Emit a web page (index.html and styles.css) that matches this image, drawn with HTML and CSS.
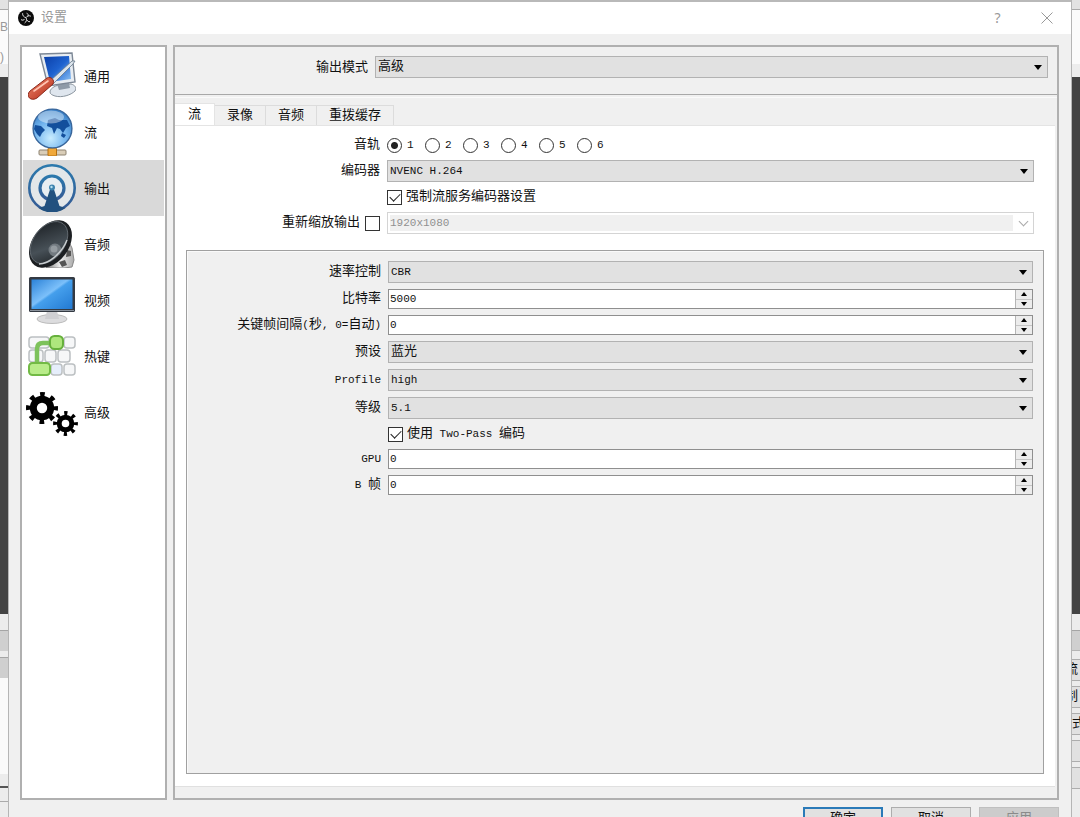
FILE: index.html
```
<!DOCTYPE html>
<html lang="zh-CN">
<head>
    <meta charset="UTF-8">
    <meta name="viewport" content="width=device-width, initial-scale=1.0">
    <title>设置</title>
    <link rel="stylesheet" href="styles.css">
</head>
<body>

<div class="desktop">
    <!-- Main window, left edge -->
    <div class="edge edge-left">
        <div class="edge-title"></div>
        <div class="edge-menu"><span>B</span><span>)</span></div>
        <div class="edge-bar"></div>
        <div class="edge-preview"></div>
        <div class="edge-docks">
            <div class="dock-head"></div>
            <div class="dock-head"></div>
            <div class="dock-list"></div>
            <div class="dock-status"></div>
        </div>
    </div>

    <div class="dialog">
        <div class="titlebar">
            <svg class="logo" viewBox="0 0 16 16">
                <circle cx="8" cy="8" r="8" fill="#0b0b0b"/>
                <path d="M4.6 3.2C4.4 5.6 5.8 7.2 8 7.6M12.9 6.2C10.8 5.2 9 6 8 7.6M6.6 13C8.6 11.8 9 9.6 8 7.6M3 9.6C4.4 10.6 6 10.2 6.6 9M8.6 3.2C10 3.6 10.6 5 10 6.2M12 11.6C10.6 12 9.4 11.2 9.2 10" fill="none" stroke="#ddd" stroke-width="1"/>
            </svg>
            <span class="title">设置</span>
            <button class="title-button" type="button" aria-label="帮助">?</button>
            <button class="title-button" type="button" aria-label="关闭">
                <svg width="12" height="12" viewBox="0 0 12 12"><path d="M.5 .5l11 11M11.5 .5l-11 11" stroke="#999" fill="none"/></svg>
            </button>
        </div>

        <div class="content">
            <nav class="sidebar">
                <button class="nav-item" type="button">
                    <svg viewBox="0 0 48 48">
                        <defs>
                            <linearGradient id="screen" x1="0" y1="0" x2="1" y2="1"><stop offset="0" stop-color="#0b3fa8"/><stop offset=".5" stop-color="#1e62cf"/><stop offset="1" stop-color="#8fc4f5"/></linearGradient>
                            <linearGradient id="handle" x1="0" y1="0" x2="1" y2="1"><stop offset="0" stop-color="#f08a70"/><stop offset="1" stop-color="#b02612"/></linearGradient>
                        </defs>
                        <path d="M22 40c0-3 4-6 9-7l12-1c4 1 6 4 4 7-4 4-13 7-20 5-3-1-5-2-5-4z" fill="#dfe6ee" stroke="#8a949e"/>
                        <path d="M28 29l12-2 2 9-11 2z" fill="#8f9ba8"/>
                        <path d="M12 2l32-1 3 29-27 4z" fill="#e8edf2" stroke="#7d8896" stroke-width="1.4"/>
                        <path d="M16 5l25-1 2 23-21 3z" fill="url(#screen)"/>
                        <path d="M22 29L44 9l3 0-2 3-20 20z" fill="#dce4ec" stroke="#66788a" stroke-width=".8"/>
                        <path d="M2 39l17-13c4-2 8 2 6 6L9 46c-6 4-12-2-7-7z" fill="url(#handle)" stroke="#8e2a1c"/>
                        <path d="M6 39l14-10" stroke="#ffc4b2" stroke-width="1.6" stroke-linecap="round"/>
                    </svg>
                    <span>通用</span>
                </button>
                <button class="nav-item" type="button">
                    <svg viewBox="0 0 48 48">
                        <defs>
                            <radialGradient id="globe" cx=".45" cy=".75" r=".75"><stop offset="0" stop-color="#c8ecff"/><stop offset=".55" stop-color="#72b4ee"/><stop offset="1" stop-color="#357cc4"/></radialGradient>
                        </defs>
                        <path d="M24 38v6" stroke="#777" stroke-width="3"/>
                        <rect x="11" y="42" width="27" height="5" rx="1" fill="#d9cdb8" stroke="#8d8271"/>
                        <rect x="20" y="40" width="8.5" height="8" rx="1" fill="#f0a83a" stroke="#b36f10"/>
                        <circle cx="24.5" cy="20.5" r="19.4" fill="url(#globe)" stroke="#39669b" stroke-width="1.4"/>
                        <path d="M7 17l6 1 4 4-3 3-2 4-3-3-3-5zM20 12l7-2 4 2 8 0 3 6-4 2-3 5-3-4-3-1-3 6-2-6-5-2zM34 25l4 2-2 3-3-2z" fill="#134f9c"/>
                        <ellipse cx="23" cy="9" rx="13" ry="6.5" fill="#fff" opacity=".4"/>
                    </svg>
                    <span>流</span>
                </button>
                <button class="nav-item active" type="button">
                    <svg viewBox="0 0 48 48">
                        <defs>
                            <linearGradient id="wave" x1="0" y1="0" x2="0" y2="1"><stop offset="0" stop-color="#2b79ad"/><stop offset="1" stop-color="#355a94"/></linearGradient>
                        </defs>
                        <circle cx="24" cy="24" r="22.7" fill="#edf5fa" fill-opacity=".5" stroke="url(#wave)" stroke-width="2.6"/>
                        <circle cx="24" cy="24" r="12" fill="#eef6fb" fill-opacity=".5" stroke="url(#wave)" stroke-width="3.2"/>
                        <path d="M22.5 24h3l6 18 6 2c-8 6-19 6-27 0l6-2z" fill="#22517f"/>
                        <circle cx="24" cy="23.5" r="3" fill="#3d83ae"/>
                        <circle cx="23.5" cy="23" r="1.2" fill="#b9e2f2"/>
                    </svg>
                    <span>输出</span>
                </button>
                <button class="nav-item" type="button">
                    <svg viewBox="0 0 48 48">
                        <defs>
                            <linearGradient id="cone" x1="0" y1="0" x2="1" y2="1"><stop offset="0" stop-color="#171b1f"/><stop offset=".6" stop-color="#475057"/><stop offset="1" stop-color="#1c2023"/></linearGradient>
                            <linearGradient id="magnet" x1="0" y1="0" x2="1" y2="0"><stop offset="0" stop-color="#777"/><stop offset=".5" stop-color="#eee"/><stop offset="1" stop-color="#aaa"/></linearGradient>
                        </defs>
                        <path d="M40 20l4 8 2 12-2 7-8 1-18 0 12-12z" fill="url(#magnet)" stroke="#888"/>
                        <path d="M31 42l6-2 2 5-5 2zM39 30l4 1v5l-5 1z" fill="#555"/>
                        <ellipse cx="22.5" cy="24" rx="18" ry="26.500" transform="rotate(37 22.5 24)" fill="#1c1f22"/>
                        <ellipse cx="21" cy="22.5" rx="15.5" ry="23.5" transform="rotate(37 21 22.5)" fill="url(#cone)" stroke="#697178" stroke-width=".8"/>
                        <circle cx="27" cy="30" r="6.5" fill="#727a80"/>
                        <circle cx="26" cy="29" r="3.5" fill="#949ba0"/>
                        <path d="M11 44c10 0 23-11 28-24" fill="none" stroke="#c8cdd0" stroke-width="1.4"/>
                    </svg>
                    <span>音频</span>
                </button>
                <button class="nav-item" type="button">
                    <svg viewBox="0 0 48 48">
                        <defs>
                            <linearGradient id="display" x1="0" y1="0" x2="1" y2="1"><stop offset="0" stop-color="#2b82d8"/><stop offset=".45" stop-color="#7cc0fa"/><stop offset=".5" stop-color="#459fec"/><stop offset="1" stop-color="#2279d2"/></linearGradient>
                        </defs>
                        <ellipse cx="24" cy="43" rx="15" ry="4.5" fill="#dcdcde" stroke="#bbb"/>
                        <path d="M19 35h10l2 8H17z" fill="#cfcfd2"/>
                        <rect x="1" y="1" width="46" height="35" rx="1.5" fill="#343a43"/>
                        <rect x="3.5" y="3.5" width="41" height="29.5" fill="url(#display)"/>
                        <path d="M2 34.5h44" stroke="#8a929c"/>
                    </svg>
                    <span>视频</span>
                </button>
                <button class="nav-item" type="button">
                    <svg viewBox="0 0 48 48">
                        <g fill="#f6f7f8" stroke="#bcc0c2" stroke-width="1.5">
                            <rect x="1" y="5" width="20" height="11" rx="3"/>
                            <rect x="36" y="5" width="11" height="11" rx="3"/>
                            <rect x="1" y="18" width="14" height="12" rx="3"/>
                            <rect x="17" y="18" width="11" height="12" rx="3"/>
                            <rect x="30" y="18" width="12" height="12" rx="3"/>
                            <rect x="23" y="32" width="11" height="11" rx="3" fill="#e6eefb"/>
                            <rect x="36" y="32" width="11" height="11" rx="3"/>
                        </g>
                        <path d="M9 33V17q0-6 6-6h9" fill="none" stroke="#7dc25b" stroke-width="4.5"/>
                        <rect x="1" y="31" width="21" height="12" rx="3.5" fill="#b9ec8a" stroke="#72ba45" stroke-width="2"/>
                        <rect x="22" y="4" width="13" height="13" rx="4.5" fill="#aee67d" stroke="#66b03c" stroke-width="2"/>
                    </svg>
                    <span>热键</span>
                </button>
                <button class="nav-item" type="button">
                    <svg class="gears" viewBox="0 0 52 48">
                        <circle cx="16" cy="20" r="8.7" fill="none" stroke="#000" stroke-width="7"/>
                        <circle cx="16" cy="20" r="13.5" fill="none" stroke="#000" stroke-width="5" stroke-dasharray="4.6 6.003" stroke-dashoffset="2.3"/>
                        <circle cx="39.5" cy="35.5" r="6.3" fill="none" stroke="#000" stroke-width="5"/>
                        <circle cx="39.5" cy="35.5" r="10.2" fill="none" stroke="#000" stroke-width="4.4" stroke-dasharray="3.2 4.811" stroke-dashoffset="1.6"/>
                    </svg>
                    <span>高级</span>
                </button>
            </nav>

            <main class="panel">
                <div class="mode-row">
                    <label for="outputMode">输出模式</label>
                    <div class="combo">
                        <select id="outputMode"><option>高级</option><option>简单</option></select>
                    </div>
                </div>

                <div class="tabs" role="tablist">
                    <button class="tab selected" type="button" role="tab" aria-selected="true">流</button>
                    <button class="tab" type="button" role="tab">录像</button>
                    <button class="tab" type="button" role="tab">音频</button>
                    <button class="tab" type="button" role="tab">重拨缓存</button>
                </div>

                <div class="pane">
                    <div class="form stream-form">
                        <span class="name">音轨</span>
                        <div class="tracks latin">
                            <label><input type="radio" name="track" checked>1</label>
                            <label><input type="radio" name="track">2</label>
                            <label><input type="radio" name="track">3</label>
                            <label><input type="radio" name="track">4</label>
                            <label><input type="radio" name="track">5</label>
                            <label><input type="radio" name="track">6</label>
                        </div>

                        <label class="name" for="encoder">编码器</label>
                        <div class="combo">
                            <select id="encoder" class="latin"><option>NVENC H.264</option></select>
                        </div>

                        <label class="check"><input type="checkbox" checked>强制流服务编码器设置</label>

                        <label class="name">重新缩放输出<input type="checkbox"></label>
                        <div class="combo disabled">
                            <select class="latin" aria-label="缩放分辨率" disabled><option>1920x1080</option></select>
                        </div>
                    </div>

                    <div class="frame">
                        <div class="form">
                            <label class="name" for="rate">速率控制</label>
                            <div class="combo">
                                <select id="rate" class="latin"><option>CBR</option></select>
                            </div>

                            <label class="name" for="bitrate">比特率</label>
                            <div class="spin">
                                <input type="text" inputmode="numeric" id="bitrate" class="latin" value="5000">
                                <div class="steps"><button type="button" aria-label="增加"></button><button type="button" aria-label="减少"></button></div>
                            </div>

                            <label class="name" for="keyint"><span>关键帧间隔<span class="latin">(</span>秒<span class="latin">, 0=</span>自动<span class="latin">)</span></span></label>
                            <div class="spin">
                                <input type="text" inputmode="numeric" id="keyint" class="latin" value="0">
                                <div class="steps"><button type="button" aria-label="增加"></button><button type="button" aria-label="减少"></button></div>
                            </div>

                            <label class="name" for="preset">预设</label>
                            <div class="combo">
                                <select id="preset"><option>蓝光</option></select>
                            </div>

                            <label class="name latin" for="profile">Profile</label>
                            <div class="combo">
                                <select id="profile" class="latin"><option>high</option></select>
                            </div>

                            <label class="name" for="level">等级</label>
                            <div class="combo">
                                <select id="level" class="latin"><option>5.1</option></select>
                            </div>

                            <label class="check"><input type="checkbox" checked><span>使用<span class="latin"> Two-Pass </span>编码</span></label>

                            <label class="name latin" for="gpu">GPU</label>
                            <div class="spin">
                                <input type="text" inputmode="numeric" id="gpu" class="latin" value="0">
                                <div class="steps"><button type="button" aria-label="增加"></button><button type="button" aria-label="减少"></button></div>
                            </div>

                            <label class="name" for="bframes"><span><span class="latin">B </span>帧</span></label>
                            <div class="spin">
                                <input type="text" inputmode="numeric" id="bframes" class="latin" value="0">
                                <div class="steps"><button type="button" aria-label="增加"></button><button type="button" aria-label="减少"></button></div>
                            </div>
                        </div>
                    </div>
                </div>
            </main>
        </div>

        <div class="footer">
            <button class="button primary" type="button">确定</button>
            <button class="button" type="button">取消</button>
            <button class="button" type="button" disabled>应用</button>
        </div>
    </div>

    <!-- Main window, right edge -->
    <div class="edge edge-right">
        <div class="edge-title"></div>
        <div class="edge-menu"></div>
        <div class="edge-bar"></div>
        <div class="edge-preview"></div>
        <div class="edge-docks controls">
            <div class="dock-head"></div>
            <div class="control">流</div>
            <div class="control">制</div>
            <div class="control wide">式</div>
            <div class="control"></div>
            <div class="control"></div>
        </div>
    </div>
</div>

</body>
</html>
```
FILE: styles.css
```
* {
    box-sizing: border-box;
}

body {
    margin: 0;
    background: #f0f0f0;
    color: #111;
    font-family: "Liberation Mono", "Noto Sans CJK SC", monospace;
    font-size: 13px;
    line-height: 18px;
}

button,
input,
select {
    margin: 0;
    font: inherit;
    color: inherit;
}

.latin {
    font-size: 11px;
}

.desktop {
    display: flex;
    height: 100vh;
    overflow: hidden;
}

/* Strips of the window behind the dialog */
.edge {
    flex: none;
    width: 9px;
    display: flex;
    flex-direction: column;
    overflow: hidden;
    background: #ececec;
    border-right: 1px solid #b5b5b5;
}

.edge-right {
    border-right: none;
    border-left: 1px solid #b5b5b5;
}

.edge-title {
    height: 10px;
    background: #e2e2e2;
    border-bottom: 1px solid #aaa;
}

.edge-menu {
    height: 54px;
    padding-top: 8px;
    display: flex;
    flex-direction: column;
    gap: 12px;
    background: #fbfbfb;
    color: #999;
    font-family: "Liberation Sans", sans-serif;
    font-size: 12px;
}

.edge-bar {
    height: 13px;
    background: #ededed;
}

.edge-preview {
    flex: 1;
    background: #434343;
}

.edge-docks {
    height: 203px;
    padding-top: 16px;
    display: flex;
    flex-direction: column;
}

.dock-head {
    height: 21px;
    margin-bottom: 6px;
    background: #cfcfcf;
    border-top: 1px solid #a5a5a5;
    flex: none;
}

.dock-list {
    height: 96px;
    margin-top: -6px;
    background: #fafafa;
}

.dock-status {
    height: 16px;
    margin-top: 12px;
    border-top: 2px solid #555;
    border-bottom: 1px solid #aaa;
}

.controls .dock-head {
    margin-bottom: 8px;
    border-bottom: 1px solid #b5b5b5;
}

.control {
    flex: none;
    height: 22px;
    margin-bottom: 5px;
    padding-right: 2px;
    display: flex;
    justify-content: flex-end;
    align-items: center;
    overflow: hidden;
    background: #e1e1e1;
    border-top: 1px solid #adadad;
    border-bottom: 1px solid #adadad;
}

.control.wide {
    padding-right: 0;
    justify-content: flex-start;
}

/* Dialog */
.dialog {
    flex: 1;
    min-width: 0;
    height: calc(100vh + 24px);
    display: flex;
    flex-direction: column;
    background: #f0f0f0;
    border-top: 2px solid #b9b9b9;
}

.titlebar {
    flex: none;
    height: 32px;
    padding-left: 9px;
    display: flex;
    align-items: center;
    background: #fff;
}

.logo {
    width: 16px;
    height: 16px;
}

.title {
    flex: 1;
    margin-left: 7px;
    color: #999;
}

.title-button {
    width: 49px;
    height: 30px;
    padding: 0;
    display: flex;
    align-items: center;
    justify-content: center;
    border: none;
    background: none;
    color: #999;
    font-family: "Noto Sans", sans-serif;
    font-size: 14px;
}

.content {
    flex: 1;
    min-height: 0;
    padding: 11px 12px 0 11px;
    display: flex;
    gap: 6px;
}

.sidebar {
    flex: none;
    width: 147px;
    padding: 1px;
    background: #fff;
    border: 2px solid #b0b0b0;
}

.nav-item {
    width: 100%;
    height: 56px;
    padding: 0 0 0 5px;
    display: flex;
    align-items: center;
    gap: 8px;
    border: none;
    background: none;
    text-align: left;
}

.nav-item span {
    padding-top: 4px;
}

.nav-item.active {
    background: #d9d9d9;
}

.nav-item svg {
    flex: none;
    width: 48px;
    height: 48px;
}

.nav-item .gears {
    width: 52px;
    margin: 0 -2px;
}

.panel {
    flex: 1;
    min-width: 0;
    display: flex;
    flex-direction: column;
    border: 2px solid #b0b0b0;
}

.mode-row {
    flex: none;
    height: 48px;
    padding: 9px 9px 0 0;
    display: grid;
    grid-template-columns: 193px 1fr;
    column-gap: 7px;
    border-bottom: 1px solid #a8a8a8;
}

.mode-row label {
    line-height: 24px;
    text-align: right;
}

/* Tabs */
.tabs {
    flex: none;
    margin-top: 2px;
    padding-top: 5px;
    display: flex;
    align-items: flex-end;
    border-top: 1px solid #fafafa;
}

.tab {
    height: 20px;
    padding: 0 12px;
    background: #f0f0f0;
    border: 1px solid #dcdcdc;
    border-left: none;
    border-bottom: none;
    line-height: 18px;
}

.tab.selected {
    height: 22px;
    padding: 0 13px;
    background: #fff;
    border-color: #e4e4e4;
}

.pane {
    flex: 1;
    margin: 0 2px 11px 0;
    padding: 10px 11px 12px;
    display: flex;
    flex-direction: column;
    gap: 16px;
    background: #fff;
    border-top: 1px solid #e4e4e4;
    border-bottom: 1px solid #e0e0e0;
}

.form {
    display: grid;
    grid-template-columns: 184px 1fr;
    gap: 6px 7px;
    align-items: center;
}

.stream-form {
    grid-template-columns: 194px 1fr;
    padding-right: 10px;
}

.frame {
    flex: 1;
    padding: 10px;
    background: #f0f0f0;
    border: 1px solid #a0a0a0;
    box-shadow: inset 1px 1px #fafafa;
}

.name {
    display: flex;
    justify-content: flex-end;
    align-items: center;
    gap: 5px;
    height: 18px;
    white-space: nowrap;
}

.check {
    grid-column: 2;
    display: flex;
    align-items: center;
    gap: 4px;
    white-space: pre;
}

.tracks {
    display: grid;
    grid-auto-flow: column;
    grid-auto-columns: 38px;
    justify-content: start;
}

.tracks label {
    display: flex;
    align-items: center;
    gap: 5px;
    height: 18px;
}

input[type="radio"],
input[type="checkbox"] {
    appearance: none;
    flex: none;
    width: 15px;
    height: 15px;
    background: #fff;
    border: 1px solid #333;
}

input[type="radio"] {
    border-radius: 50%;
}

input[type="radio"]:checked {
    background: radial-gradient(circle, #222 3px, #fff 4px);
}

input[type="checkbox"]:checked::before {
    content: "";
    display: block;
    width: 9px;
    height: 5px;
    margin: 2px 0 0 2px;
    border-left: 1px solid #222;
    border-bottom: 1px solid #222;
    transform: rotate(-45deg);
}

/* Drop-downs */
.combo {
    position: relative;
    height: 22px;
}

.combo select {
    appearance: none;
    display: block;
    width: 100%;
    height: 22px;
    padding: 0 20px 0 2px;
    background: #e1e1e1;
    border: 1px solid #b2b2b2;
    border-radius: 0;
    line-height: 20px;
}

.combo::after {
    content: "";
    position: absolute;
    top: 9px;
    right: 6px;
    border: 4px solid transparent;
    border-top: 5px solid #000;
    border-bottom: none;
    pointer-events: none;
}

.combo.disabled select {
    background: linear-gradient(#f0f0f0, #f0f0f0) no-repeat 2px 2px / calc(100% - 22px) calc(100% - 4px) #fff;
    border-color: #d4d4d4;
    color: #909090;
    opacity: 1;
}

.combo.disabled::after {
    top: 6px;
    right: 7px;
    width: 6px;
    height: 6px;
    border: none;
    border-right: 1px solid #aaa;
    border-bottom: 1px solid #aaa;
    transform: rotate(45deg);
}

/* Number boxes */
.spin {
    height: 20px;
    display: flex;
    background: #fff;
    border: 1px solid #8f8f8f;
}

.spin input {
    flex: 1;
    min-width: 0;
    padding: 0 0 0 1px;
    border: none;
    background: none;
    outline: none;
}

.steps {
    width: 17px;
    display: flex;
    flex-direction: column;
    background: #ececec;
    border-left: 1px solid #b5b5b5;
}

.steps button {
    flex: 1;
    padding: 0;
    display: flex;
    align-items: center;
    justify-content: center;
    border: none;
    background: none;
}

.steps button + button {
    border-top: 1px solid #c5c5c5;
}

.steps button::before {
    content: "";
    border: 3px solid transparent;
    border-top: none;
    border-bottom: 4px solid #000;
}

.steps button + button::before {
    border-top: 4px solid #000;
    border-bottom: none;
}

.footer {
    flex: none;
    height: 41px;
    padding: 7px 12px 10px;
    display: flex;
    justify-content: flex-end;
    gap: 8px;
}

.button {
    width: 80px;
    height: 24px;
    padding: 0;
    background: #e1e1e1;
    border: 1px solid #adadad;
    line-height: 20px;
}

.button.primary {
    border: 2px solid #2a7ab8;
}

.button:disabled {
    background: #ccc;
    border-color: #bfbfbf;
    color: #8a8a8a;
}
```
